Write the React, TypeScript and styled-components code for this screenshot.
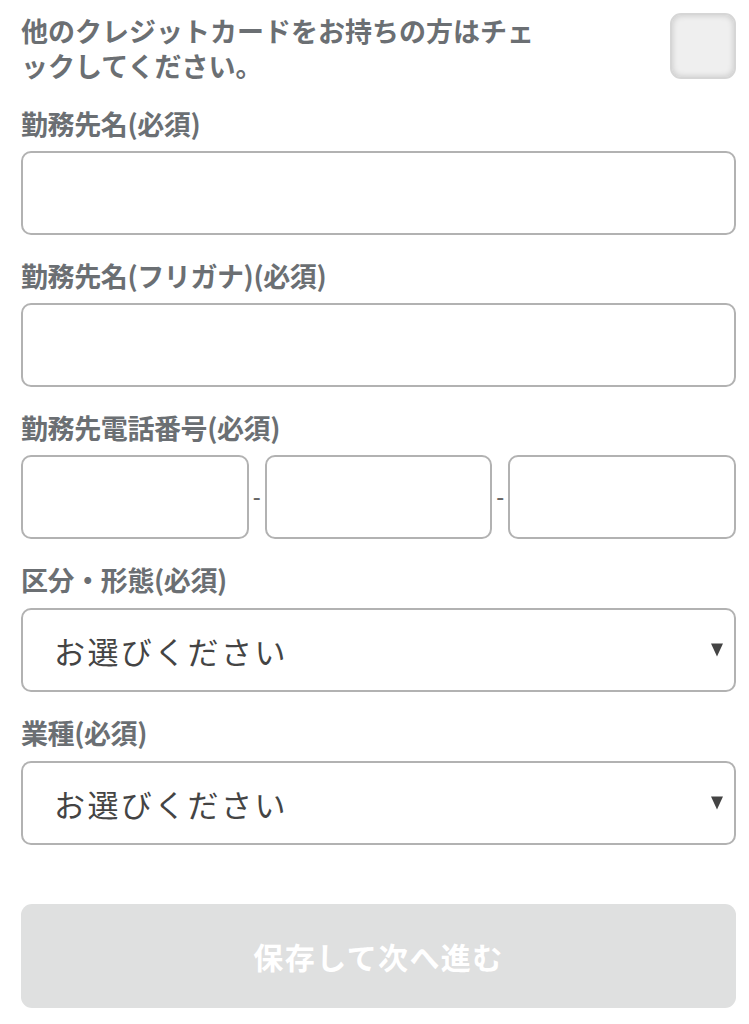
import React from "react";
import styled, { createGlobalStyle } from "styled-components";

const GlobalStyle = createGlobalStyle`
  html, body { margin: 0; padding: 0; background: #ffffff; }
  body {
    font-family: "Noto Sans CJK JP", "Noto Sans", sans-serif;
    overflow: hidden;
  }
  * { box-sizing: border-box; }
`;

const Page = styled.div`
  width: 749px;
  padding: 13px 13px 0 21px;
  display: flex;
  flex-direction: column;
  gap: 23px;
`;

const CheckRow = styled.label`
  display: flex;
  justify-content: space-between;
  align-items: flex-start;
`;

const CheckText = styled.span`
  width: 530px;
  font-size: 27px;
  line-height: 35px;
  font-weight: 700;
  color: #6b6f73;
  letter-spacing: 0px;
`;

const CheckBox = styled.input.attrs({ type: "checkbox" })`
  appearance: none;
  margin: 0;
  width: 66px;
  height: 66px;
  border-radius: 11px;
  background: #efefef;
  border: 2px solid #d6d6d6;
  box-shadow: inset 0 0 6px rgba(0, 0, 0, 0.18);
`;

const Field = styled.div<{ $tall?: boolean }>`
  display: flex;
  flex-direction: column;
  gap: ${(p) => (p.$tall ? "11px" : "10px")};
`;

const Label = styled.div`
  font-size: 27px;
  line-height: 35px;
  font-weight: 700;
  color: #6b6f73;
  letter-spacing: -0.4px;
`;

const TextInput = styled.input`
  width: 100%;
  height: 84px;
  border: 2px solid #b2b2b2;
  border-radius: 10px;
  background: #fff;
  font-family: inherit;
  font-size: 30px;
  padding: 0 30px;
  outline: none;
`;

const PhoneRow = styled.div`
  display: flex;
  align-items: center;
`;

const PhoneInput = styled(TextInput)`
  flex: 1;
  min-width: 0;
`;

const Dash = styled.span`
  width: 16px;
  text-align: center;
  font-family: "Liberation Sans", sans-serif;
  font-size: 24px;
  line-height: 1;
  color: #666;
`;

const SelectWrap = styled.div`
  position: relative;
`;

const Select = styled.select`
  appearance: none;
  width: 100%;
  height: 84px;
  border: 2px solid #b2b2b2;
  border-radius: 10px;
  background: #fff;
  font-family: "Noto Sans CJK JP", sans-serif;
  font-size: 31px;
  color: #444;
  padding: 0 40px 0 31px;
  letter-spacing: 2.4px;
  outline: none;
`;

const Arrow = styled.span`
  position: absolute;
  right: 13px;
  top: 50%;
  transform: translateY(-50%);
  width: 0;
  height: 0;
  border-left: 6.5px solid transparent;
  border-right: 6.5px solid transparent;
  border-top: 13px solid #444;
  pointer-events: none;
`;

const Submit = styled.button`
  margin-top: 36px;
  width: 100%;
  height: 104px;
  border: none;
  border-radius: 11px;
  background: #dfe0e0;
  color: #ffffff;
  font-family: "Noto Sans CJK JP", sans-serif;
  font-size: 30px;
  font-weight: 700;
  letter-spacing: 1.4px;
`;

const SelectField: React.FC<{ label: string }> = ({ label }) => (
  <Field $tall>
    <Label>{label}</Label>
    <SelectWrap>
      <Select defaultValue="">
        <option value="">お選びください</option>
      </Select>
      <Arrow />
    </SelectWrap>
  </Field>
);

export default function App() {
  return (
    <>
      <GlobalStyle />
      <Page>
        <CheckRow>
          <CheckText>他のクレジットカードをお持ちの方はチェックしてください。</CheckText>
          <CheckBox />
        </CheckRow>
        <Field>
          <Label>勤務先名(必須)</Label>
          <TextInput type="text" />
        </Field>
        <Field>
          <Label>勤務先名(フリガナ)(必須)</Label>
          <TextInput type="text" />
        </Field>
        <Field>
          <Label>勤務先電話番号(必須)</Label>
          <PhoneRow>
            <PhoneInput type="tel" />
            <Dash>-</Dash>
            <PhoneInput type="tel" />
            <Dash>-</Dash>
            <PhoneInput type="tel" />
          </PhoneRow>
        </Field>
        <SelectField label="区分・形態(必須)" />
        <SelectField label="業種(必須)" />
        <Submit type="button">保存して次へ進む</Submit>
      </Page>
    </>
  );
}
